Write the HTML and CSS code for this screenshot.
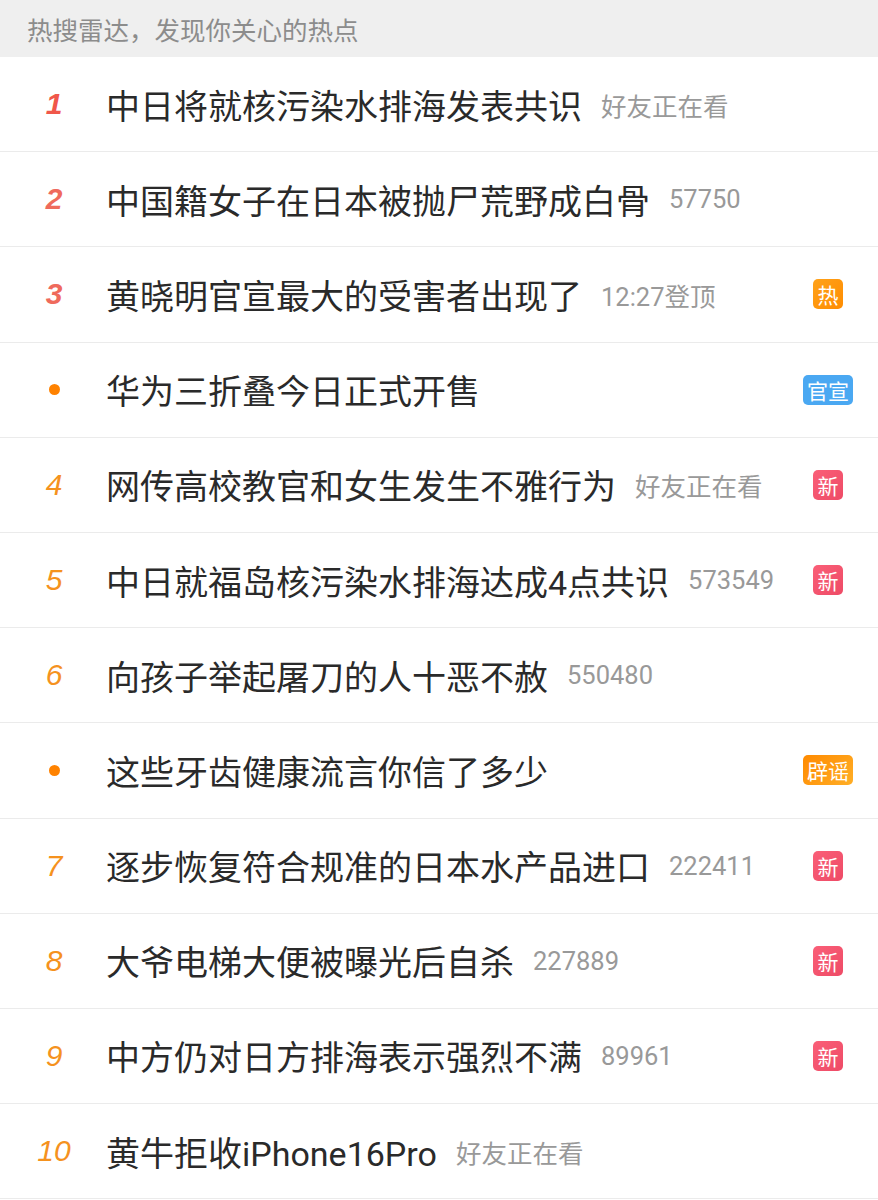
FILE: index.html
```html
<!DOCTYPE html>
<html lang="zh-CN">
<head>
    <meta charset="UTF-8">
    <meta name="viewport" content="width=device-width, initial-scale=1.0">
    <title>热搜雷达</title>
    <link rel="stylesheet" href="styles.css">
</head>
<body>

    <div class="radar-head">热搜雷达，发现你关心的热点</div>

    <ul class="hot-list">
        <li class="hot-row">
            <span class="rank rank-top">1</span>
            <span class="title">中日将就核污染水排海发表共识</span>
            <span class="meta">好友正在看</span>
            <span class="tag-slot"></span>
        </li>
        <li class="hot-row">
            <span class="rank rank-top rank-soft">2</span>
            <span class="title">中国籍女子在日本被抛尸荒野成白骨</span>
            <span class="meta">57750</span>
            <span class="tag-slot"></span>
        </li>
        <li class="hot-row">
            <span class="rank rank-top rank-soft">3</span>
            <span class="title">黄晓明官宣最大的受害者出现了</span>
            <span class="meta">12:27登顶</span>
            <span class="tag-slot"><span class="tag tag-hot">热</span></span>
        </li>
        <li class="hot-row">
            <span class="rank"><span class="dot"></span></span>
            <span class="title">华为三折叠今日正式开售</span>
            <span class="tag-slot"><span class="tag tag-official">官宣</span></span>
        </li>
        <li class="hot-row">
            <span class="rank">4</span>
            <span class="title">网传高校教官和女生发生不雅行为</span>
            <span class="meta">好友正在看</span>
            <span class="tag-slot"><span class="tag tag-new">新</span></span>
        </li>
        <li class="hot-row">
            <span class="rank">5</span>
            <span class="title">中日就福岛核污染水排海达成4点共识</span>
            <span class="meta">573549</span>
            <span class="tag-slot"><span class="tag tag-new">新</span></span>
        </li>
        <li class="hot-row">
            <span class="rank">6</span>
            <span class="title">向孩子举起屠刀的人十恶不赦</span>
            <span class="meta">550480</span>
            <span class="tag-slot"></span>
        </li>
        <li class="hot-row">
            <span class="rank"><span class="dot"></span></span>
            <span class="title">这些牙齿健康流言你信了多少</span>
            <span class="tag-slot"><span class="tag tag-rumor">辟谣</span></span>
        </li>
        <li class="hot-row">
            <span class="rank">7</span>
            <span class="title">逐步恢复符合规准的日本水产品进口</span>
            <span class="meta">222411</span>
            <span class="tag-slot"><span class="tag tag-new">新</span></span>
        </li>
        <li class="hot-row">
            <span class="rank">8</span>
            <span class="title">大爷电梯大便被曝光后自杀</span>
            <span class="meta">227889</span>
            <span class="tag-slot"><span class="tag tag-new">新</span></span>
        </li>
        <li class="hot-row">
            <span class="rank">9</span>
            <span class="title">中方仍对日方排海表示强烈不满</span>
            <span class="meta">89961</span>
            <span class="tag-slot"><span class="tag tag-new">新</span></span>
        </li>
        <li class="hot-row">
            <span class="rank">10</span>
            <span class="title">黄牛拒收iPhone16Pro</span>
            <span class="meta">好友正在看</span>
            <span class="tag-slot"></span>
        </li>
    </ul>

</body>
</html>
```

FILE: styles.css
```css
body {
    margin: 0;
    background-color: #fff;
    font-family: Roboto, "Noto Sans CJK SC", sans-serif;
}

/* Cabecera gris */
.radar-head {
    height: 57px;
    padding-left: 27px;
    display: flex;
    align-items: center;
    background-color: #efefef;
    color: #8c8c8c;
    font-size: 25.5px;
}

.hot-list {
    list-style: none;
    margin: 0;
    padding: 0;
}

.hot-row {
    height: 95.2px;
    box-sizing: border-box;
    display: flex;
    align-items: center;
    border-bottom: 1px solid #ebebeb;
}

.rank {
    width: 104px;
    padding-left: 2px;
    flex-shrink: 0;
    display: flex;
    justify-content: center;
    align-items: center;
    font-family: "Liberation Sans", Arial, sans-serif;
    font-style: italic;
    font-size: 30px;
    color: #f5921e;
}

.rank-top {
    font-weight: bold;
    color: #f0574a;
}

.rank-soft {
    color: #ef6a5c;
}

.dot {
    width: 11px;
    height: 11px;
    border-radius: 50%;
    background-color: #ff8200;
}

.title {
    font-size: 34px;
    color: #2a2a2a;
    white-space: nowrap;
}

.meta {
    margin-left: 19px;
    font-size: 25.5px;
    color: #999;
}

.tag-slot {
    margin-left: auto;
    width: 60px;
    margin-right: 20px;
    display: flex;
    justify-content: center;
}

.tag {
    height: 30px;
    min-width: 30px;
    padding: 0 2px;
    box-sizing: border-box;
    border-radius: 5px;
    display: flex;
    align-items: center;
    justify-content: center;
    color: #fff;
    font-size: 21px;
}

.tag-hot {
    background: linear-gradient(135deg, #ffa21a, #ff8c00);
}

.tag-official {
    padding: 0 4px;
    background-color: #4aa8f2;
}

.tag-new {
    background: linear-gradient(135deg, #fa5f78, #ee4b66);
}

.tag-rumor {
    padding: 0 4px;
    background: linear-gradient(135deg, #ff8a00, #ffae26);
}
```
